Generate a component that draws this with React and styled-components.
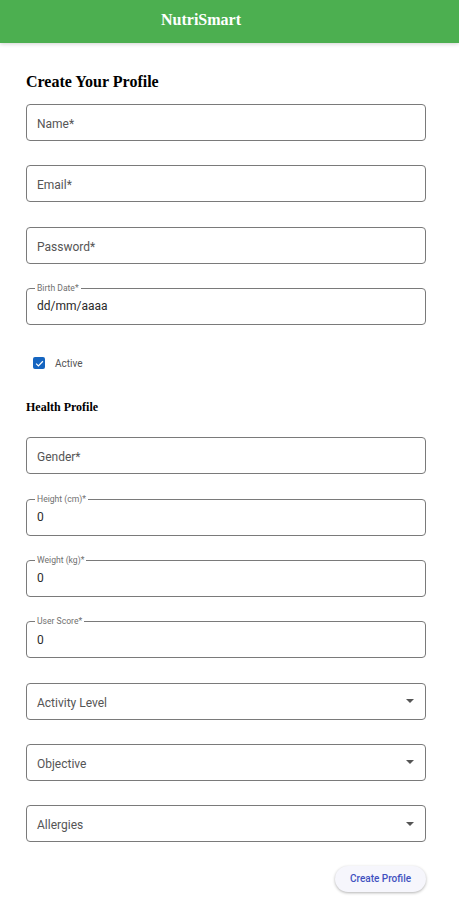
import React, { useState } from "react";
import styled, { createGlobalStyle } from "styled-components";

const GlobalStyle = createGlobalStyle`
  body {
    margin: 0;
    background: #fff;
    font-family: Roboto, "Liberation Sans", sans-serif;
  }
`;

const Header = styled.header`
  height: 43px;
  background: #4caf50;
  box-shadow: 0 1px 4px rgba(0, 0, 0, 0.18);
  display: flex;
  align-items: center;
  padding-left: 161px;
  padding-bottom: 4px;
  box-sizing: border-box;
`;

const Brand = styled.h1`
  margin: 0;
  font-family: "Liberation Serif", serif;
  font-weight: bold;
  font-size: 16px;
  color: #fff;
`;

const Form = styled.form`
  display: flex;
  flex-direction: column;
  padding: 29px 33px 20px 26px;
`;

const Title = styled.h2`
  margin: 0 0 13px;
  font-family: "Liberation Serif", serif;
  font-weight: bold;
  font-size: 16px;
  line-height: 19px;
  color: #000;
`;

const Section = styled.h3`
  margin: 0 0 23px;
  font-family: "Liberation Serif", serif;
  font-weight: bold;
  font-size: 12px;
  line-height: 14px;
  color: #000;
`;

const Field = styled.div`
  position: relative;
  height: 37px;
  box-sizing: border-box;
  border: 1px solid #7a7a7a;
  border-radius: 4px;
  display: flex;
  align-items: center;
  padding: ${(p) => (p.$filled ? "0 10px 0" : "3px 10px 0")};
  margin-bottom: 24.33px;
  font-size: 12px;
  color: ${(p) => (p.$filled ? "#2a2a2a" : "#555")};
`;

const Legend = styled.span`
  position: absolute;
  top: -6px;
  left: 8px;
  padding: 0 2px;
  background: #fff;
  font-size: 8.6px;
  line-height: 10px;
  color: #707070;
`;

const Arrow = styled.span`
  margin-left: auto;
  margin-right: 1px;
  margin-top: -3px;
  width: 0;
  height: 0;
  border-left: 4px solid transparent;
  border-right: 4px solid transparent;
  border-top: 4px solid #555;
`;

const CheckRow = styled.label`
  display: flex;
  align-items: center;
  gap: 10px;
  margin: 8px 0 31px 7px;
  font-size: 10px;
  color: #555;
`;

const Box = styled.span`
  width: 12px;
  height: 12px;
  border-radius: 2px;
  background: ${(p) => (p.$on ? "#1565c0" : "#fff")};
  border: ${(p) => (p.$on ? "none" : "1.5px solid #666")};
  display: flex;
  align-items: center;
  justify-content: center;
`;

const Actions = styled.div`
  display: flex;
  justify-content: flex-end;
  margin-top: -1px;
`;

const Button = styled.button`
  width: 91px;
  height: 26px;
  border: none;
  border-radius: 13px;
  background: #f6f6fc;
  box-shadow: 0 1px 3px rgba(0, 0, 0, 0.3);
  font-family: Roboto, "Liberation Sans", sans-serif;
  font-size: 10px;
  font-weight: 500;
  color: #3f51c0;
  cursor: pointer;
`;

const topFields = [
  { label: "Name*" },
  { label: "Email*" },
  { label: "Password*" },
  { legend: "Birth Date*", value: "dd/mm/aaaa" },
];

const healthFields = [
  { label: "Gender*" },
  { legend: "Height (cm)*", value: "0" },
  { legend: "Weight (kg)*", value: "0" },
  { legend: "User Score*", value: "0" },
  { label: "Activity Level", select: true },
  { label: "Objective", select: true },
  { label: "Allergies", select: true },
];

function OutlinedField({ label, legend, value, select }) {
  return (
    <Field $filled={!!value}>
      {legend && <Legend>{legend}</Legend>}
      <span>{value || label}</span>
      {select && <Arrow />}
    </Field>
  );
}

export default function App() {
  const [active, setActive] = useState(true);

  return (
    <>
      <GlobalStyle />
      <Header>
        <Brand>NutriSmart</Brand>
      </Header>
      <Form onSubmit={(e) => e.preventDefault()}>
        <Title>Create Your Profile</Title>
        {topFields.map((f, i) => (
          <OutlinedField key={i} {...f} />
        ))}
        <CheckRow onClick={() => setActive(!active)}>
          <Box $on={active}>
            {active && (
              <svg width="9" height="9" viewBox="0 0 24 24">
                <path d="M3 12.5l6 6L21 6" fill="none" stroke="#fff" strokeWidth="3.2" />
              </svg>
            )}
          </Box>
          Active
        </CheckRow>
        <Section>Health Profile</Section>
        {healthFields.map((f, i) => (
          <OutlinedField key={i} {...f} />
        ))}
        <Actions>
          <Button type="submit">Create Profile</Button>
        </Actions>
      </Form>
    </>
  );
}
